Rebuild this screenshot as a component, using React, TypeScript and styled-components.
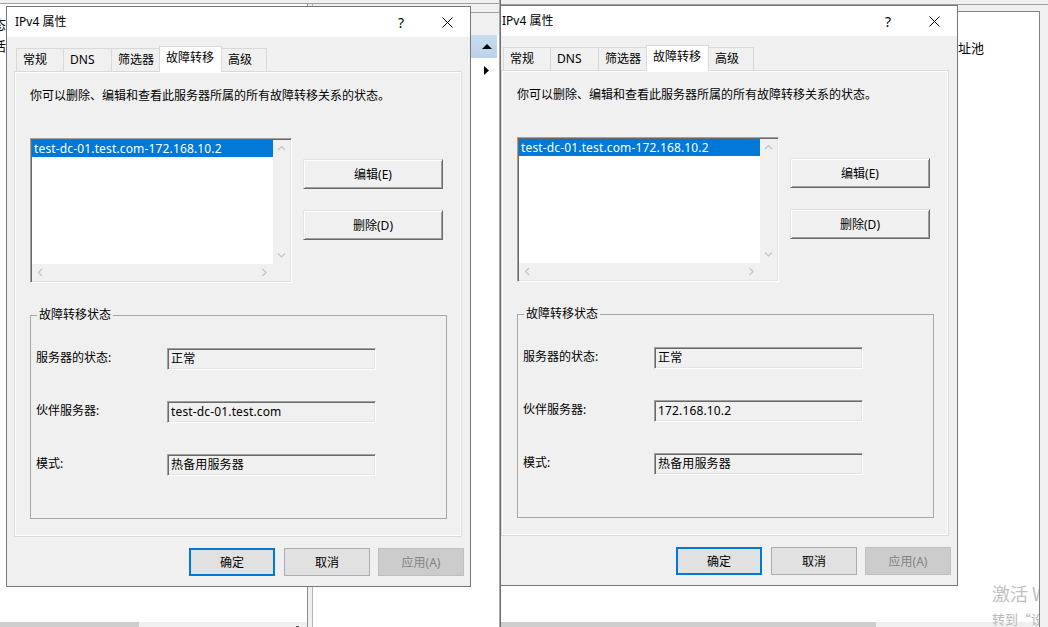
import React from 'react';
import styled, { createGlobalStyle } from 'styled-components';

const GlobalStyle = createGlobalStyle`
  html, body { margin: 0; padding: 0; }
  body {
    font-family: "Noto Sans", "Noto Sans CJK SC", sans-serif;
    font-size: 12px;
    color: #000;
    background: #fff;
  }
  * { box-sizing: border-box; }
`;

/* ---------- desktop & background windows ---------- */

const Desktop = styled.div`
  display: flex;
  width: 1048px;
  height: 627px;
  overflow: hidden;
  background: #fff;
`;

const Pane = styled.div<{ $w: number }>`
  position: relative;
  flex: none;
  width: ${p => p.$w}px;
  height: 100%;
  overflow: hidden;
  background: #fff;
`;

const PaneDivider = styled.div`
  flex: none;
  width: 2px;
  height: 100%;
  border-left: 1px solid #a8a8a8;
  border-right: 1px solid #6e6e6e;
`;

const BgWindow = styled.div`
  display: flex;
  flex-direction: column;
  height: 100%;
`;

const Strip = styled.div<{ $h: number; $line?: boolean }>`
  flex: none;
  height: ${p => p.$h}px;
  background: #f0f0f0;
  border-bottom: ${p => (p.$line ? '1px solid #a0a0a0' : 'none')};
`;

const BgRow = styled.div`
  flex: 1;
  display: flex;
  min-height: 0;
`;

const BgColumn = styled.div<{ $w?: number }>`
  display: flex;
  flex-direction: column;
  ${p => (p.$w ? `width: ${p.$w}px; flex: none;` : 'flex: 1;')}
  min-width: 0;
`;

const Fragments = styled.div`
  padding-top: 9px;
  font-family: "Noto Sans CJK SC", sans-serif;
  font-size: 13px;
  line-height: 22px;
  margin-left: -7px;
`;

const Filler = styled.div`
  flex: 1;
`;

const ScrollStrip = styled.div`
  flex: none;
  height: 5px;
  display: flex;
  background: #f0f0f0;
`;

const ScrollThumb = styled.div<{ $w: number }>`
  width: ${p => p.$w}px;
  background: #cdcdcd;
`;

const ScrollTip = styled.div`
  align-self: flex-end;
  width: 3px;
  height: 1px;
  margin-left: auto;
  margin-right: 8px;
  background: #606060;
`;

const Splitter = styled.div`
  flex: none;
  width: 6px;
  background: #f0f0f0;
  border-left: 1px solid #8c8c8c;
  border-right: 1px solid #b4b4b4;
`;

const HeaderCell = styled.div`
  flex: none;
  height: 23px;
  margin-right: 2px;
  background: linear-gradient(#c9dcef, #bcd2ea);
  display: flex;
  align-items: center;
  justify-content: flex-end;
  padding-right: 5px;
`;

const TreeRow = styled.div`
  flex: none;
  height: 24px;
  display: flex;
  align-items: center;
  justify-content: flex-end;
  padding-right: 10px;
`;

const RightPanel = styled.div`
  position: relative;
  flex: 1;
  display: flex;
  flex-direction: column;
  background: #fff;
  border-top: 1px solid #828282;
  border-right: 1px solid #828282;
  overflow: hidden;
`;

const Gutter = styled.div`
  flex: none;
  width: 8px;
  background: #f0f0f0;
`;

const PoolLabel = styled.div`
  margin: 27px 0 0 444px;
  font-family: "Noto Sans CJK SC", sans-serif;
  font-size: 13px;
  line-height: 18px;
  white-space: nowrap;
`;

const Watermark = styled.div`
  position: absolute;
  left: 491px;
  top: 570px;
  white-space: nowrap;
  font-family: "Noto Sans CJK SC", sans-serif;
  color: #c0c0c0;
  z-index: 1;
`;

const WatermarkTitle = styled.div`
  font-size: 18px;
  line-height: 22px;
`;

const WatermarkHint = styled.div`
  margin-top: 6px;
  font-size: 13px;
  line-height: 18px;
  color: #b8b8b8;
`;

/* ---------- dialog ---------- */

const Window = styled.div<{ $x: number; $y: number }>`
  position: absolute;
  left: ${p => p.$x}px;
  top: ${p => p.$y}px;
  z-index: 5;
  width: 465px;
  height: 581px;
  display: flex;
  flex-direction: column;
  border: 1px solid #767676;
  background: #f0f0f0;
`;

const TitleBar = styled.div`
  flex: none;
  height: 30px;
  display: flex;
  align-items: center;
  background: #fff;
`;

const Title = styled.div`
  flex: 1;
  padding-left: 8px;
  line-height: 16px;
`;

const CaptionButton = styled.div`
  width: 46px;
  height: 30px;
  display: flex;
  align-items: center;
  justify-content: center;
  font-size: 14px;
`;

const Body = styled.div`
  flex: 1;
  display: flex;
  flex-direction: column;
  padding: 9px 8px 10px 7px;
`;

const TabStrip = styled.div`
  position: relative;
  z-index: 1;
  flex: none;
  height: 25px;
  display: flex;
  align-items: flex-end;
  padding-left: 2px;
`;

const Tab = styled.div<{ $w: number; $active?: boolean }>`
  position: relative;
  z-index: ${p => (p.$active ? 2 : 1)};
  width: ${p => p.$w}px;
  height: ${p => (p.$active ? 26 : 23)}px;
  margin-bottom: ${p => (p.$active ? -1 : 0)}px;
  margin-left: -1px;
  &:first-child { margin-left: 0; }
  display: flex;
  align-items: center;
  padding: 0 0 ${p => (p.$active ? 3 : 0)}px 6px;
  border: 1px solid #d9d9d9;
  border-bottom: none;
  background: ${p => (p.$active ? '#ffffff' : '#f0f0f0')};
  line-height: 16px;
  white-space: nowrap;
`;

const TabPanel = styled.div`
  flex: none;
  height: 466px;
  display: flex;
  flex-direction: column;
  padding: 16px 15px 0 15px;
  border: 1px solid #d9d9d9;
  box-shadow: inset 0 0 0 1px #fff;
  background: #f0f0f0;
`;

const Description = styled.div`
  line-height: 16px;
  white-space: nowrap;
`;

const ListRow = styled.div`
  display: flex;
  align-items: flex-start;
  margin-top: 34px;
`;

const ListBox = styled.div`
  flex: none;
  width: 262px;
  height: 145px;
  padding: 1px;
  display: grid;
  grid-template-columns: 1fr 17px;
  grid-template-rows: 1fr 17px;
  background: #fff;
  border: 1px solid;
  border-color: #a0a0a0 #ffffff #ffffff #a0a0a0;
  box-shadow: inset 1px 1px 0 #696969, inset -1px -1px 0 #e3e3e3;
`;

const ListContent = styled.div`
  background: #fff;
  overflow: hidden;
`;

const ListItem = styled.div<{ $selected?: boolean }>`
  height: 17px;
  line-height: 17px;
  padding-left: 2px;
  letter-spacing: 0.15px;
  white-space: nowrap;
  background: ${p => (p.$selected ? '#0078d7' : 'transparent')};
  color: ${p => (p.$selected ? '#fff' : '#000')};
`;

const ScrollBar = styled.div<{ $vertical?: boolean }>`
  display: flex;
  flex-direction: ${p => (p.$vertical ? 'column' : 'row')};
  justify-content: space-between;
  background: #f0f0f0;
`;

const ScrollArrow = styled.div`
  width: 17px;
  height: 17px;
  display: flex;
  align-items: center;
  justify-content: center;
`;

const ScrollCorner = styled.div`
  background: #f0f0f0;
`;

const SideButtons = styled.div`
  display: flex;
  flex-direction: column;
  gap: 21px;
  margin-left: 11px;
  padding-top: 21px;
`;

const ClassicButton = styled.button`
  width: 140px;
  height: 30px;
  padding: 0;
  font: inherit;
  color: #000;
  background: #f0f0f0;
  border: 1px solid;
  border-color: #e3e3e3 #696969 #696969 #e3e3e3;
  box-shadow: inset 1px 1px 0 #fff, inset -1px -1px 0 #a0a0a0;
`;

const GroupBox = styled.fieldset`
  margin: 24px 0 0 0;
  width: 417px;
  height: 212px;
  min-inline-size: 0;
  padding: 0 0 0 5px;
  border: 1px solid #a7a7a7;
  display: flex;
  flex-direction: column;
`;

const GroupLegend = styled.legend`
  margin-left: 1px;
  padding: 0 2px;
  line-height: 16px;
`;

const FieldRows = styled.div`
  display: flex;
  flex-direction: column;
  gap: 31px;
  padding-top: 25px;
`;

const FieldRow = styled.div`
  display: grid;
  grid-template-columns: 131px 209px;
  height: 22px;
`;

const FieldLabel = styled.div`
  line-height: 20px;
  white-space: nowrap;
`;

const ReadOnlyField = styled.div`
  height: 22px;
  padding-left: 3px;
  line-height: 20px;
  letter-spacing: 0.15px;
  white-space: nowrap;
  background: #f0f0f0;
  border: 1px solid;
  border-color: #a0a0a0 #ffffff #ffffff #a0a0a0;
  box-shadow: inset 1px 1px 0 #696969, inset -1px -1px 0 #e3e3e3;
`;

const ButtonRow = styled.div`
  flex: none;
  display: flex;
  justify-content: flex-end;
  gap: 8px;
  margin: 11px -2px 0 0;
  & > :first-child { margin-right: 1px; }
`;

const FooterButton = styled.button<{ $variant?: 'primary' | 'disabled' }>`
  width: 86px;
  height: 28px;
  padding: 0;
  font: inherit;
  color: ${p => (p.$variant === 'disabled' ? '#838383' : '#000')};
  background: ${p => (p.$variant === 'disabled' ? '#cccccc' : '#e1e1e1')};
  border: 1px solid
    ${p => (p.$variant === 'primary' ? '#0078d7' : p.$variant === 'disabled' ? '#bfbfbf' : '#adadad')};
  box-shadow: ${p => (p.$variant === 'primary' ? 'inset 0 0 0 1px #0078d7' : 'none')};
`;

/* ---------- icons ---------- */

const Chevron = ({ dir }: { dir: 'up' | 'down' | 'left' | 'right' }) => {
  const d = {
    up: 'M1 5 L4.5 1.5 L8 5',
    down: 'M1 1.5 L4.5 5 L8 1.5',
    left: 'M5 1 L1.5 4.5 L5 8',
    right: 'M1.5 1 L5 4.5 L1.5 8',
  }[dir];
  const vertical = dir === 'up' || dir === 'down';
  return (
    <svg width={vertical ? 9 : 7} height={vertical ? 7 : 9} viewBox={vertical ? '0 0 9 7' : '0 0 7 9'}>
      <path d={d} fill="none" stroke="#c2c2c2" strokeWidth="1.2" />
    </svg>
  );
};

const CloseIcon = () => (
  <svg width="11" height="11" viewBox="0 0 11 11">
    <path d="M0.5 0.5 L10.5 10.5 M10.5 0.5 L0.5 10.5" stroke="#000" strokeWidth="1" />
  </svg>
);

const TriangleUp = () => (
  <svg width="10" height="5" viewBox="0 0 10 5">
    <path d="M0 5 L5 0 L10 5 Z" fill="#000" />
  </svg>
);

const TriangleRight = () => (
  <svg width="5" height="9" viewBox="0 0 5 9">
    <path d="M0 0 L5 4.5 L0 9 Z" fill="#000" />
  </svg>
);

/* ---------- dialog component ---------- */

const tabs = [
  { label: '常规', w: 48 },
  { label: 'DNS', w: 49 },
  { label: '筛选器', w: 49 },
  { label: '故障转移', w: 63, active: true },
  { label: '高级', w: 46 },
];

const PropertiesDialog = ({ x, y, partner }: { x: number; y: number; partner: string }) => (
  <Window $x={x} $y={y}>
    <TitleBar>
      <Title>IPv4 属性</Title>
      <CaptionButton>?</CaptionButton>
      <CaptionButton>
        <CloseIcon />
      </CaptionButton>
    </TitleBar>
    <Body>
      <TabStrip>
        {tabs.map(t => (
          <Tab key={t.label} $w={t.w} $active={t.active}>
            {t.label}
          </Tab>
        ))}
      </TabStrip>
      <TabPanel>
        <Description>你可以删除、编辑和查看此服务器所属的所有故障转移关系的状态。</Description>
        <ListRow>
          <ListBox>
            <ListContent>
              <ListItem $selected>test-dc-01.test.com-172.168.10.2</ListItem>
            </ListContent>
            <ScrollBar $vertical>
              <ScrollArrow>
                <Chevron dir="up" />
              </ScrollArrow>
              <ScrollArrow>
                <Chevron dir="down" />
              </ScrollArrow>
            </ScrollBar>
            <ScrollBar>
              <ScrollArrow>
                <Chevron dir="left" />
              </ScrollArrow>
              <ScrollArrow>
                <Chevron dir="right" />
              </ScrollArrow>
            </ScrollBar>
            <ScrollCorner />
          </ListBox>
          <SideButtons>
            <ClassicButton>编辑(E)</ClassicButton>
            <ClassicButton>删除(D)</ClassicButton>
          </SideButtons>
        </ListRow>
        <GroupBox>
          <GroupLegend>故障转移状态</GroupLegend>
          <FieldRows>
            <FieldRow>
              <FieldLabel>服务器的状态:</FieldLabel>
              <ReadOnlyField>正常</ReadOnlyField>
            </FieldRow>
            <FieldRow>
              <FieldLabel>伙伴服务器:</FieldLabel>
              <ReadOnlyField>{partner}</ReadOnlyField>
            </FieldRow>
            <FieldRow>
              <FieldLabel>模式:</FieldLabel>
              <ReadOnlyField>热备用服务器</ReadOnlyField>
            </FieldRow>
          </FieldRows>
        </GroupBox>
      </TabPanel>
      <ButtonRow>
        <FooterButton $variant="primary">确定</FooterButton>
        <FooterButton>取消</FooterButton>
        <FooterButton $variant="disabled">应用(A)</FooterButton>
      </ButtonRow>
    </Body>
  </Window>
);

/* ---------- page ---------- */

export default function App() {
  return (
    <>
      <GlobalStyle />
      <Desktop>
        <Pane $w={499}>
          <BgWindow>
            <Strip $h={4} $line />
            <BgRow>
              <BgColumn $w={307}>
                <Fragments>
                  <div>态</div>
                  <div>活</div>
                </Fragments>
                <Filler />
                <ScrollStrip>
                  <ScrollThumb $w={139} />
                  <ScrollTip />
                </ScrollStrip>
              </BgColumn>
              <Splitter />
              <BgColumn>
                <Strip $h={9} $line />
                <Strip $h={22} />
                <HeaderCell>
                  <TriangleUp />
                </HeaderCell>
                <TreeRow>
                  <TriangleRight />
                </TreeRow>
                <Filler />
              </BgColumn>
            </BgRow>
          </BgWindow>
          <PropertiesDialog x={6} y={6} partner="test-dc-01.test.com" />
        </Pane>
        <PaneDivider />
        <Pane $w={547}>
          <BgWindow>
            <Strip $h={5} $line />
            <Strip $h={6} />
            <BgRow>
              <RightPanel>
                <PoolLabel>地址池</PoolLabel>
                <Filler />
                <ScrollStrip>
                  <ScrollThumb $w={375} />
                </ScrollStrip>
                <Watermark>
                  <WatermarkTitle>激活 Windows</WatermarkTitle>
                  <WatermarkHint>转到“设置”以激活 Windows。</WatermarkHint>
                </Watermark>
              </RightPanel>
              <Gutter />
            </BgRow>
          </BgWindow>
          <PropertiesDialog x={-8} y={5} partner="172.168.10.2" />
        </Pane>
      </Desktop>
    </>
  );
}
